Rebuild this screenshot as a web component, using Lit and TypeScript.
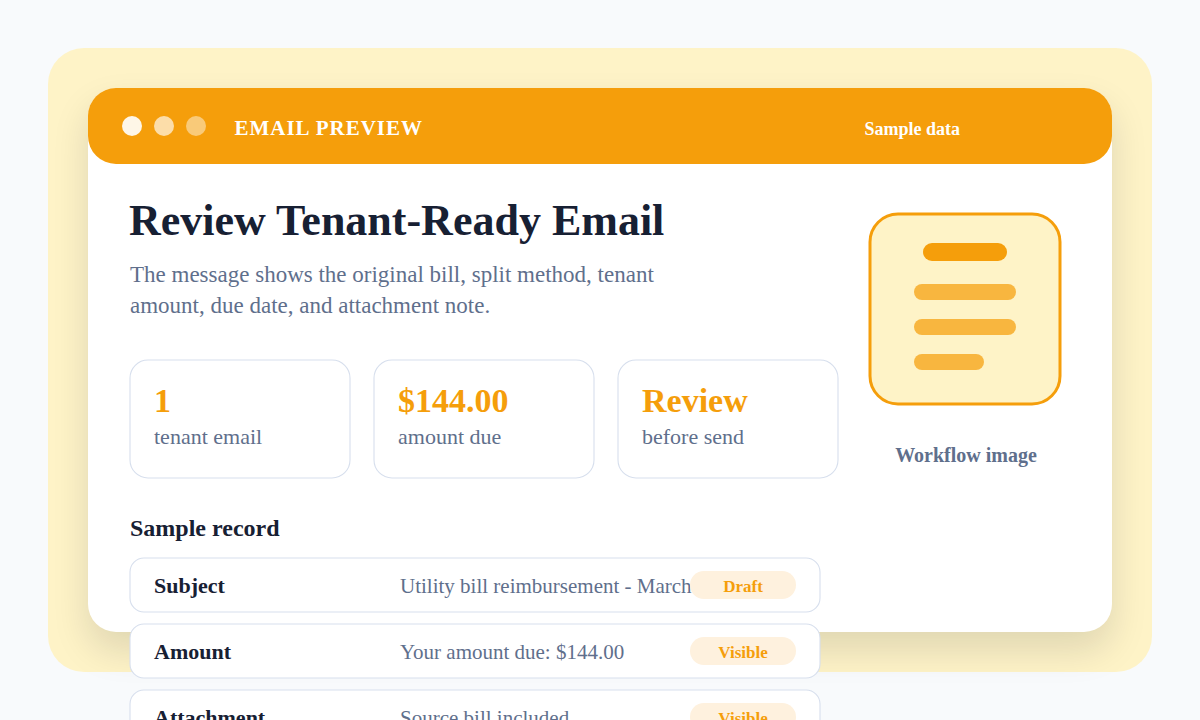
import { LitElement, html, svg, css } from "lit";
import { customElement, property } from "lit/decorators.js";

interface Metric { value: string; label: string; }
interface RecordRow { name: string; value: string; status: string; }

const METRICS: Metric[] = [
  { value: "1", label: "tenant email" },
  { value: "$144.00", label: "amount due" },
  { value: "Review", label: "before send" },
];

const ROWS: RecordRow[] = [
  { name: "Subject", value: "Utility bill reimbursement - March", status: "Draft" },
  { name: "Amount", value: "Your amount due: $144.00", status: "Visible" },
  { name: "Attachment", value: "Source bill included", status: "Visible" },
];

/* Rounded outline centred on the box edge; content is stacked on top of it. */
@customElement("outlined-box")
class OutlinedBox extends LitElement {
  @property({ type: Number }) width = 0;
  @property({ type: Number }) height = 0;
  @property({ type: Number }) radius = 0;

  static styles = css`
    :host { display: grid; }
    .frame { grid-area: 1 / 1; display: block; overflow: visible; }
    .frame rect { fill: #ffffff; stroke: #d7dfed; stroke-width: 1.1; }
    .body { grid-area: 1 / 1; z-index: 1; }
  `;

  render() {
    return html`
      <svg class="frame" width=${this.width} height=${this.height}>
        ${svg`<rect width=${this.width} height=${this.height} rx=${this.radius}></rect>`}
      </svg>
      <div class="body"><slot></slot></div>
    `;
  }
}

@customElement("app-root")
class AppRoot extends LitElement {
  static styles = css`
    :host {
      display: block;
      width: 1200px;
      height: 720px;
      overflow: hidden;
      background: #f8fafc;
      font-family: "Liberation Serif", "Times New Roman", serif;
      color: #172033;
    }
    * { box-sizing: border-box; }
    .stage { height: 720px; padding: 48px; }
    .backdrop { height: 624px; padding: 40px; border-radius: 36px; background: #fef3c7; }
    .window {
      height: 544px;
      border-radius: 28px;
      background: #ffffff;
      box-shadow: 0 18px 36px rgba(15, 23, 42, 0.13);
    }
    .bar {
      height: 76px;
      padding: 0 152px 0 34px;
      border-radius: 28px;
      background: #f59e0b;
      color: #ffffff;
      display: flex;
      align-items: center;
      white-space: nowrap;
      font-weight: 700;
    }
    .dots { display: flex; gap: 12px; }
    .dot { width: 20px; height: 20px; border-radius: 50%; background: #ffffff; }
    .dot.one { opacity: 0.9; }
    .dot.two { opacity: 0.65; }
    .dot.three { opacity: 0.45; }
    .caption { font-size: 21px; line-height: 24px; letter-spacing: 1px; margin-left: 28.4px; padding-top: 4px; }
    .tag { font-size: 18px; line-height: 20px; margin-left: auto; padding-top: 6px; }
    .content { display: flex; align-items: flex-start; padding-left: 42px; }
    .main { width: 740px; flex: none; padding-top: 32px; white-space: nowrap; }
    .title { margin: 0 0 14px -1px; font-size: 44px; line-height: 49px; font-weight: 700; }
    .lead { margin: 0 0 39px; font-size: 23px; line-height: 31px; color: #5f6f8c; }
    .metrics { display: flex; gap: 24px; }
    .metric { padding: 22px 24px 0; }
    .figure { font-size: 34px; line-height: 37px; font-weight: 700; color: #f59e0b; }
    .label { margin-top: 5px; font-size: 22px; line-height: 25px; color: #5f6f8c; }
    .section { margin: 37px 0 17px; font-size: 24px; line-height: 26px; font-weight: 700; }
    .rows { display: flex; flex-direction: column; gap: 12px; width: 690px; }
    .row { display: grid; grid-template-columns: 246px 290px 106px; padding: 0 24px; }
    .name { padding-top: 15px; font-size: 22px; line-height: 25px; font-weight: 700; }
    .value { padding-top: 16px; font-size: 21px; line-height: 24px; color: #5f6f8c; }
    .badge {
      margin-top: 13px;
      height: 28px;
      padding-top: 6px;
      border-radius: 14px;
      background: #fef1de;
      color: #f59e0b;
      font-size: 17px;
      line-height: 19px;
      font-weight: 700;
      text-align: center;
    }
    .aside { width: 190px; padding-top: 50px; }
    .art { display: block; overflow: visible; }
    .note { margin: 40px -10px 0 -8px; font-size: 20px; line-height: 22px; font-weight: 700; color: #5f6f8c; text-align: center; white-space: nowrap; }
  `;

  render() {
    return html`
      <div class="stage">
        <div class="backdrop">
          <div class="window">
            <header class="bar">
              <div class="dots">
                <span class="dot one"></span><span class="dot two"></span><span class="dot three"></span>
              </div>
              <span class="caption">EMAIL PREVIEW</span>
              <span class="tag">Sample data</span>
            </header>
            <div class="content">
              <main class="main">
                <h1 class="title">Review Tenant-Ready Email</h1>
                <p class="lead">The message shows the original bill, split method, tenant<br />amount, due date, and attachment note.</p>
                <div class="metrics">
                  ${METRICS.map((m) => html`
                    <outlined-box width="220" height="118" radius="18">
                      <div class="metric">
                        <div class="figure">${m.value}</div>
                        <div class="label">${m.label}</div>
                      </div>
                    </outlined-box>`)}
                </div>
                <h2 class="section">Sample record</h2>
                <div class="rows">
                  ${ROWS.map((r) => html`
                    <outlined-box width="690" height="54" radius="14">
                      <div class="row">
                        <span class="name">${r.name}</span>
                        <span class="value">${r.value}</span>
                        <span class="badge">${r.status}</span>
                      </div>
                    </outlined-box>`)}
                </div>
              </main>
              <aside class="aside">
                <svg class="art" width="190" height="190">
                  <rect width="190" height="190" rx="28" fill="#fef3c7" stroke="#f59e0b" stroke-width="3" />
                  <rect x="53" y="29" width="84" height="18" rx="9" fill="#f59e0b" />
                  <g fill="#f59e0b" fill-opacity="0.72">
                    <rect x="44" y="70" width="102" height="16" rx="8" />
                    <rect x="44" y="105" width="102" height="16" rx="8" />
                    <rect x="44" y="140" width="70" height="16" rx="8" />
                  </g>
                </svg>
                <div class="note">Workflow image</div>
              </aside>
            </div>
          </div>
        </div>
      </div>
    `;
  }
}
